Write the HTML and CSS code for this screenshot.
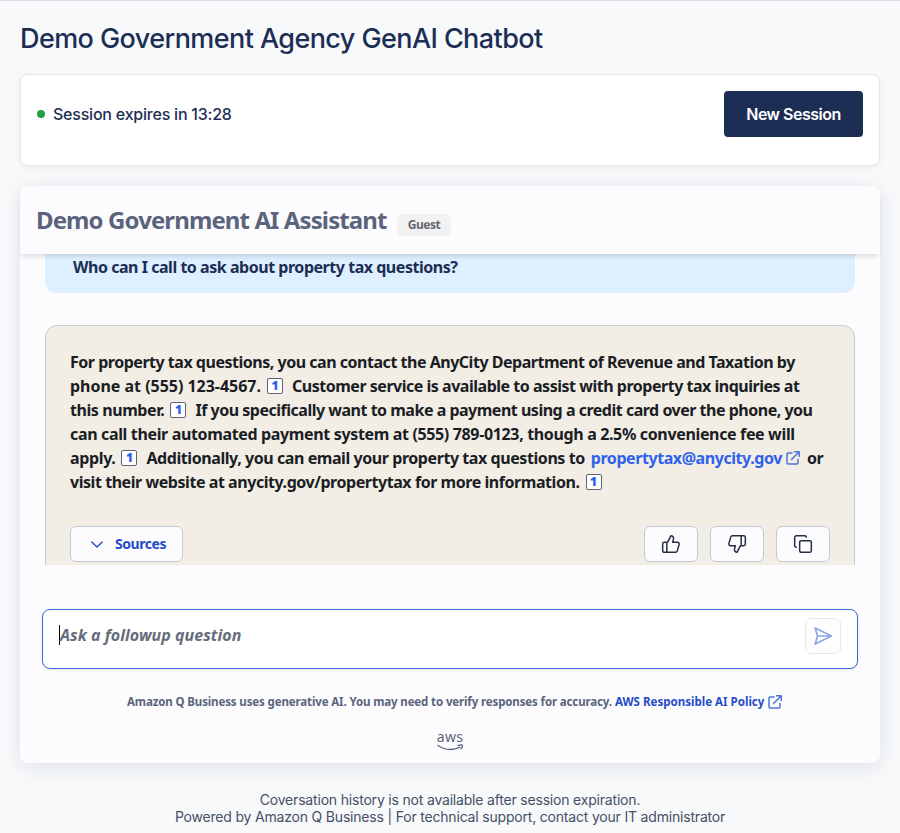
FILE: index.html
```html
<!DOCTYPE html>
<html lang="en">
<head>
<meta charset="utf-8">
<title>Demo Government Agency GenAI Chatbot</title>
<link rel="stylesheet" href="styles.css">
</head>
<body>
<h1 class="page-title"><span>Demo Government Agency GenAI Chatbot</span></h1>
<section class="session">
  <div class="status"><i class="dot"></i><span class="session-text">Session expires in 13:28</span></div>
  <button class="new-session"><span>New Session</span></button>
</section>
<main class="chat">
  <header class="chat-header">
    <h2>Demo Government AI Assistant</h2>
    <span class="guest"><span>Guest</span></span>
  </header>
  <div class="messages">
    <div class="question"><span>Who can I call to ask about property tax questions?</span></div>
    <article class="answer">
      <div class="copy">
        <p class="line l1">For property tax questions, you can contact the AnyCity Department of Revenue and Taxation by</p>
        <p class="line l2"><span class="phone">phone at (555) 123-4567.</span><b class="cite">1</b><span>Customer service is available to assist with property tax inquiries at</span></p>
        <p class="line l3"><span class="number">this number.</span><b class="cite">1</b><span>If you specifically want to make a payment using a credit card over the phone, you</span></p>
        <p class="line l4">can call their automated payment system at (555) 789-0123, though a 2.5% convenience fee will</p>
        <p class="line l5"><span class="apply">apply.</span><b class="cite">1</b><span>Additionally, you can email your property tax questions to</span><a class="mail">propertytax@anycity.gov</a><svg class="ext" viewBox="0 0 14 14"><path d="M6 2H2.2Q1 2 1 3.2V11.8Q1 13 2.2 13H10.800Q12 13 12 11.800V8.500M8.500 .8H13.200V5.500M13 1L5.500 8.500"/></svg><span>or</span></p>
        <p class="line l6"><span>visit their website at anycity.gov/propertytax for more information.</span><b class="cite">1</b></p>
      </div>
      <div class="actions">
        <button class="sources"><svg viewBox="0 0 12 7"><path d="M.8 1L6 6L11.200 1"/></svg><span>Sources</span></button>
        <div class="tools">
          <button><svg viewBox="0 0 24 24"><path d="M7 10v12M15 5.880 14 10h5.830a2 2 0 0 1 1.920 2.560l-2.330 8A2 2 0 0 1 17.500 22H4a2 2 0 0 1-2-2v-8a2 2 0 0 1 2-2h2.760a2 2 0 0 0 1.790-1.110L12 2a3.130 3.130 0 0 1 3 3.880Z"/></svg></button>
          <button><svg viewBox="0 0 24 24"><path d="M17 14V2M9 18.120 10 14H4.170a2 2 0 0 1-1.920-2.560l2.330-8A2 2 0 0 1 6.500 2H20a2 2 0 0 1 2 2v8a2 2 0 0 1-2 2h-2.760a2 2 0 0 0-1.790 1.110L12 22a3.130 3.130 0 0 1-3-3.880Z"/></svg></button>
          <button><svg viewBox="0 0 24 24"><rect x="8" y="8" width="14" height="14" rx="2"/><path d="M4 16c-1.100 0-2-.9-2-2V4c0-1.100.9-2 2-2h10c1.100 0 2 .9 2 2"/></svg></button>
        </div>
      </div>
    </article>
  </div>
  <div class="composer">
    <div class="field"><i class="caret"></i><em>Ask a followup question</em></div>
    <button class="send"><svg viewBox="0 0 20 18"><path d="M2.200 1L18.500 9L2.200 17L4.500 9ZM4.500 9H18"/></svg></button>
  </div>
  <div class="disclaimer"><span class="note">Amazon Q Business uses generative AI. You may need to verify responses for accuracy.</span><a class="policy">AWS Responsible AI Policy</a><svg class="ext" viewBox="0 0 14 14"><path d="M6 2H2.200Q1 2 1 3.200V11.800Q1 13 2.200 13H10.800Q12 13 12 11.800V8.500M8.500 .8H13.200V5.500M13 1L5.500 8.500"/></svg></div>
  <div class="aws"><span>aws</span><svg viewBox="0 0 28 7"><path d="M1.800 1.500Q13 8.500 24 3.200"/><path d="M22 1.300Q27 .3 26.500 1.800Q26.200 3.600 25 4.800"/></svg></div>
</main>
<footer class="footer"><p class="f1"><span>Coversation history is not available after session expiration.</span></p><p class="f2"><span>Powered by Amazon Q Business | For technical support, contact your IT administrator</span></p></footer>
</body>
</html>
```
FILE: styles.css
```css
* { box-sizing: border-box; margin: 0; padding: 0; }
body { height: 833px; padding: 0 20px; overflow: hidden; background: #f7f9fb; border-top: 1px solid #dcdce9; font-family: Inter, sans-serif; color: #1c2e54; }
button { font: inherit; border: 0; }
svg { display: block; fill: none; stroke: currentColor; stroke-linecap: round; stroke-linejoin: round; }
.page-title { height: 73px; padding-top: 21px; font-size: 27px; line-height: 34px; font-weight: 500; letter-spacing: -.58px; white-space: nowrap; }
.session { height: 92px; padding: 16px; display: flex; justify-content: space-between; align-items: flex-start; background: #fff; border: 1px solid #e5e7eb; border-radius: 8px; box-shadow: 0 2px 6px rgba(20,30,50,.05); }
.status { height: 46px; display: flex; align-items: center; gap: 8px; font-size: 16px; font-weight: 500; letter-spacing: -.22px; }
.dot { width: 8px; height: 8px; border-radius: 50%; background: #22a045; }
.new-session { width: 139px; height: 46px; color: #fff; background: #1c2e54; border-radius: 4px; font-size: 16px; font-weight: 600; letter-spacing: -.5px; }
.chat { height: 577px; margin-top: 20px; background: #fcfcfe; border-radius: 8px; box-shadow: 0 4px 20px rgba(20,30,50,.1); font-family: "Noto Sans", sans-serif; font-weight: 700; letter-spacing: -.5px; white-space: nowrap; }
.chat-header { position: relative; height: 68px; display: flex; padding: 0 16px; background: #fcfcfe; border-radius: 8px 8px 0 0; box-shadow: 0 4px 5px -2px rgba(0,0,0,.15); color: #5b647c; }
.chat-header h2 { width: 361px; padding-top: 17px; font-size: 24px; line-height: 34px; letter-spacing: -.9px; }
.guest { width: 54px; height: 22px; margin-top: 28px; border-radius: 6px; background: #f2f2f3; color: #656871; font-size: 12px; line-height: 22px; text-align: center; }
.messages { height: 311px; padding: 0 25px; overflow: hidden; }
.question { height: 39px; padding-left: 28px; border-radius: 0 0 12px 12px; background: #deefff; font-size: 16px; line-height: 27px; letter-spacing: -.465px; }
.answer { height: 270px; margin-top: 32px; padding: 24px; border: 1px solid #c6cad5; border-radius: 12px; background: #f2ede5; color: #1a1e24; }
.copy { font-size: 16px; }
.line { height: 24px; display: flex; align-items: center; line-height: 24px; letter-spacing: -.48px; }
.l3 { letter-spacing: -.49px; }
.l4 { letter-spacing: -.35px; }
.l5 { letter-spacing: -.43px; }
.l6 { letter-spacing: -.445px; }
.phone { letter-spacing: -.02px; }
.number { letter-spacing: -.42px; }
.apply { letter-spacing: -.35px; }
.cite { width: 16px; height: 16px; flex: none; margin: 0 9px 0 6px; background: #fff; border: 1px solid #5b6478; border-radius: 2px; color: #2c5ee8; font-size: 12px; line-height: 14px; letter-spacing: 0; text-align: center; }
.mail { color: #2f62ea; margin-left: 6px; }
.ext { width: 14px; height: 14px; flex: none; margin: 0 7px 0 4px; color: #4d74db; stroke-width: 1.5; }
.actions { display: flex; justify-content: space-between; margin-top: 32px; }
.sources { width: 113px; height: 36px; padding: 0 0 0 20px; display: flex; align-items: center; gap: 12px; border: 1px solid #c6cad8; border-radius: 6px; background: #fcfcfe; color: #264bc8; font-size: 14px; letter-spacing: -.45px; }
.sources span { padding-bottom: 1px; }
.sources svg { width: 12px; height: 7px; stroke-width: 1.400; }
.tools { display: flex; gap: 12px; }
.tools button { width: 54px; height: 36px; display: grid; place-items: center; border: 1px solid #c6cad8; border-radius: 6px; background: #fcfcfe; color: #252f44; }
.tools svg { width: 20px; height: 20px; stroke-width: 1.800; }
.composer { height: 60px; margin: 44px 22px 0; padding: 8px 16px; display: flex; justify-content: space-between; background: #fff; border: 1px solid #3d67d2; border-radius: 8px; box-shadow: 0 1px 3px rgba(0,0,0,.1); }
.field { display: flex; height: 34px; align-items: center; font-size: 16px; color: #656d7c; letter-spacing: .04px; }
.caret { width: 1px; height: 20px; background: #000; }
.send { width: 36px; height: 36px; display: grid; place-items: center; border: 1px solid #e7e8ec; border-radius: 6px; background: #fdfdfe; color: #93a4e4; }
.send svg { width: 20px; height: 18px; stroke-width: 1.700; }
.disclaimer { height: 20px; margin-top: 23px; padding-left: 107px; display: flex; align-items: center; font-size: 11.5px; letter-spacing: -.13px; color: #5b647c; }
.disclaimer span, .disclaimer a { padding-bottom: 1px; }
.policy { color: #264bc8; margin-left: 3px; letter-spacing: .02px; }
.aws { width: 28px; height: 20px; margin: 19px auto 0; color: #5b647c; font-size: 14px; line-height: 12px; font-weight: 400; letter-spacing: .25px; text-align: center; }
.aws span { display: block; height: 13px; }
.aws svg { width: 28px; height: 7px; stroke-width: 1.300; }
.footer { padding-top: 28px; text-align: center; font-size: 14px; line-height: 17px; letter-spacing: -.19px; color: #465064; }
```
